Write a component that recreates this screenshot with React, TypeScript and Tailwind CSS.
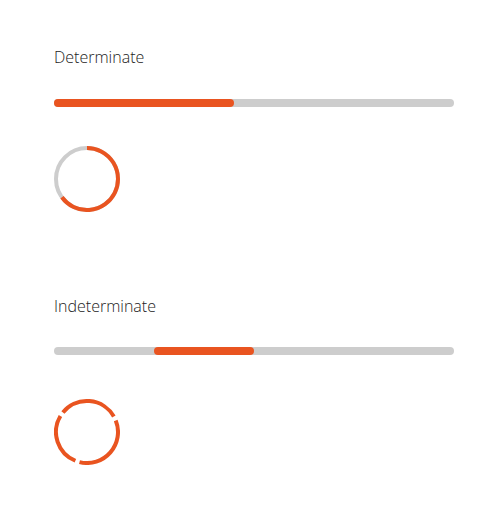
import React from "react";

const ORANGE = "#e95420";
const GRAY = "#cdcdcd";

function Bar({ start, end }: { start: number; end: number }) {
  return (
    <div className="relative h-2 w-full rounded-full bg-[#cdcdcd]">
      <div
        className="absolute inset-y-0 rounded-full bg-[#e95420]"
        style={{ left: `${start}%`, width: `${end - start}%` }}
      />
    </div>
  );
}

function arc(cx: number, cy: number, r: number, a0: number, a1: number) {
  const p = (a: number) => {
    const t = (a * Math.PI) / 180;
    return [cx + r * Math.sin(t), cy - r * Math.cos(t)];
  };
  const [x0, y0] = p(a0);
  const [x1, y1] = p(a1);
  const large = a1 - a0 > 180 ? 1 : 0;
  return `M ${x0} ${y0} A ${r} ${r} 0 ${large} 1 ${x1} ${y1}`;
}

function Ring({ value }: { value: number }) {
  return (
    <svg width="66" height="66" viewBox="0 0 66 66">
      <circle cx="33" cy="33" r="31" fill="none" stroke={GRAY} strokeWidth="4" />
      <path d={arc(33, 33, 31, 0, value * 3.6)} fill="none" stroke={ORANGE} strokeWidth="4" />
    </svg>
  );
}

function Spinner() {
  const segs: [number, number][] = [
    [68, 194],
    [202, 301],
    [309, 420],
  ];
  return (
    <svg width="66" height="66" viewBox="0 0 66 66">
      {segs.map(([a, b], i) => (
        <path key={i} d={arc(33, 33, 31, a, b)} fill="none" stroke={ORANGE} strokeWidth="4" />
      ))}
    </svg>
  );
}

export default function App() {
  return (
    <div className="h-[518px] w-[504px] bg-white pl-[54px] pr-[50px] pt-[47px] font-['Open_Sans',sans-serif] text-[#222]">
      <section className="flex flex-col">
        <h2 className="text-[16px] font-light leading-5">Determinate</h2>
        <div className="mt-[32px]">
          <Bar start={0} end={45} />
        </div>
        <div className="mt-[39px]">
          <Ring value={65} />
        </div>
      </section>
      <section className="mt-[84px] flex flex-col">
        <h2 className="text-[16px] font-light leading-5">Indeterminate</h2>
        <div className="mt-[31px]">
          <Bar start={25} end={50} />
        </div>
        <div className="mt-[44px]">
          <Spinner />
        </div>
      </section>
    </div>
  );
}
